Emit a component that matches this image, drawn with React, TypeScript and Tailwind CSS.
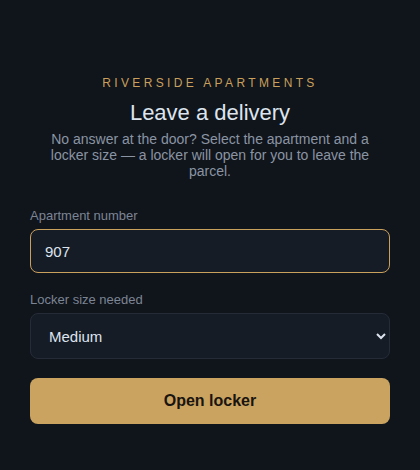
import React from "react";

export default function App() {
  return (
    <div
      className="min-h-[470px] w-full bg-[#10141b] flex justify-center"
      style={{ fontFamily: '"Liberation Sans", Arial, sans-serif' }}
    >
      <div className="w-[360px] pt-[76px] flex flex-col">
        <div className="text-center text-[12px] leading-[14px] tracking-[0.28em] text-[#c9a05c]">
          RIVERSIDE APARTMENTS
        </div>
        <h1 className="mt-[10px] text-center text-[22px] leading-[26px] text-[#dde4ee]">
          Leave a delivery
        </h1>
        <p className="mt-[5px] mx-auto max-w-[340px] text-center text-[14px] leading-[16px] text-[#8a94a3]">
          No answer at the door? Select the apartment and a locker size — a locker will open for you to leave the parcel.
        </p>

        <label className="mt-[29px] text-[13px] leading-[16px] text-[#7c8594]">
          Apartment number
        </label>
        <input
          defaultValue="907"
          className="mt-[5px] h-[44px] w-full rounded-[8px] border border-[#c9a05c] bg-[#161c26] px-[14px] text-[15px] text-[#dde4ee] outline-none"
        />

        <label className="mt-[19px] text-[13px] leading-[16px] text-[#7c8594]">
          Locker size needed
        </label>
        <select
          defaultValue="Medium"
          className="mt-[5px] h-[46px] w-full rounded-[8px] border border-[#252c38] bg-[#161c26] px-[14px] text-[15px] text-[#dde4ee] outline-none [color-scheme:dark]"
        >
          <option>Small</option>
          <option>Medium</option>
          <option>Large</option>
        </select>

        <button className="mt-[19px] h-[46px] w-full rounded-[8px] bg-[#c9a35f] text-[16px] font-bold text-[#1a1410]">
          Open locker
        </button>
      </div>
    </div>
  );
}
